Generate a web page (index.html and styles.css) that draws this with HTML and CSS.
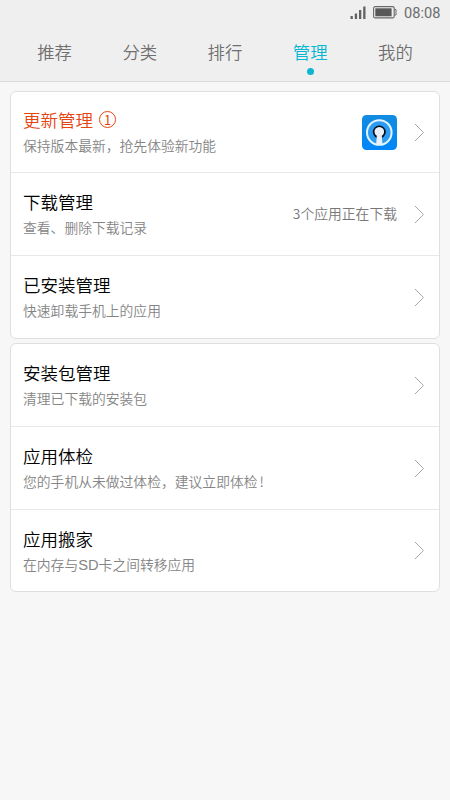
FILE: index.html
```html
<!DOCTYPE html>
<html lang="zh-CN">
<head>
<meta charset="utf-8">
<title>应用市场</title>
<link rel="stylesheet" href="styles.css">
</head>
<body>
<header class="header">
  <div class="status">
    <svg class="signal" width="16" height="13" viewBox="0 0 16 13" fill="#626262"><rect x="0.5" y="10" width="2.3" height="3"/><rect x="4.8" y="7.5" width="2.3" height="5.5"/><rect x="9" y="4" width="2.3" height="9"/><rect x="13.2" y="0.5" width="2.3" height="12.5"/></svg>
    <svg class="battery" width="24" height="13" viewBox="0 0 24 13"><rect x="0.6" y="0.6" width="20.6" height="11.3" rx="1.5" fill="none" stroke="#686868" stroke-width="1.1"/><rect x="2.3" y="2.3" width="16.3" height="8" fill="#585858"/><path d="M21.5 3.5H23V9H21.5" fill="none" stroke="#686868"/></svg>
    <span class="clock">08:08</span>
  </div>
  <nav class="tabs">
    <a class="tab">推荐</a>
    <a class="tab">分类</a>
    <a class="tab">排行</a>
    <a class="tab active">管理</a>
    <a class="tab">我的</a>
  </nav>
</header>
<main>
  <section class="card">
    <div class="row first">
      <div class="text">
        <h2 class="title update">更新管理<span class="count">1</span></h2>
        <p class="desc">保持版本最新，抢先体验新功能</p>
      </div>
      <svg class="app" width="35" height="35" viewBox="0 0 35 35">
        <defs><linearGradient id="blue" x1="0" y1="0" x2="0" y2="1"><stop offset="0" stop-color="#138cdf"/><stop offset="1" stop-color="#0086fa"/></linearGradient></defs>
        <rect width="35" height="35" rx="4.5" fill="url(#blue)"/>
        <circle cx="17.3" cy="17.5" r="12.3" fill="#2b9cf2" stroke="#e4f3fd" stroke-width="2"/>
        <circle cx="17.3" cy="17" r="6.5" fill="#06101c"/>
        <path d="M14.8 20.8A4.8 4.8 0 1 1 19.8 20.8L20.4 28.8Q17.3 29.8 14.2 28.8Z" fill="#e9f0f7"/>
      </svg>
      <svg class="arrow" width="11" height="19" viewBox="0 0 11 19"><path d="M1 1L9.5 9.5L1 18"/></svg>
    </div>
    <div class="row">
      <div class="text">
        <h2 class="title">下载管理</h2>
        <p class="desc">查看、删除下载记录</p>
      </div>
      <span class="info">3个应用正在下载</span>
      <svg class="arrow" width="11" height="19" viewBox="0 0 11 19"><path d="M1 1L9.5 9.5L1 18"/></svg>
    </div>
    <div class="row">
      <div class="text">
        <h2 class="title">已安装管理</h2>
        <p class="desc">快速卸载手机上的应用</p>
      </div>
      <svg class="arrow" width="11" height="19" viewBox="0 0 11 19"><path d="M1 1L9.5 9.5L1 18"/></svg>
    </div>
  </section>
  <section class="card">
    <div class="row">
      <div class="text">
        <h2 class="title">安装包管理</h2>
        <p class="desc">清理已下载的安装包</p>
      </div>
      <svg class="arrow" width="11" height="19" viewBox="0 0 11 19"><path d="M1 1L9.5 9.5L1 18"/></svg>
    </div>
    <div class="row">
      <div class="text">
        <h2 class="title">应用体检</h2>
        <p class="desc">您的手机从未做过体检，建议立即体检<span class="mark">!</span></p>
      </div>
      <svg class="arrow" width="11" height="19" viewBox="0 0 11 19"><path d="M1 1L9.5 9.5L1 18"/></svg>
    </div>
    <div class="row">
      <div class="text">
        <h2 class="title">应用搬家</h2>
        <p class="desc">在内存与<span class="latin">SD</span>卡之间转移应用</p>
      </div>
      <svg class="arrow" width="11" height="19" viewBox="0 0 11 19"><path d="M1 1L9.5 9.5L1 18"/></svg>
    </div>
  </section>
</main>
</body>
</html>
```
FILE: styles.css
```css
* { box-sizing: border-box; }
body {
  margin: 0;
  min-height: 800px;
  background: #f7f7f7;
  font-family: "Noto Sans CJK SC", sans-serif;
  font-weight: 350;
}
.header {
  height: 82px;
  background: #efefef;
  border-bottom: 1px solid #dcdcdc;
}
.status {
  height: 25px;
  padding-right: 9px;
  display: flex;
  justify-content: flex-end;
  align-items: center;
}
.signal { margin-right: 7px; }
.battery { margin-right: 7px; }
.clock {
  width: 37px;
  padding-top: 1px;
  font: 400 14.6px/25px Roboto, sans-serif;
  color: #6c6c6c;
  white-space: nowrap;
}
.tabs {
  display: flex;
  padding: 0 12px;
}
.tab {
  flex: 1;
  display: flex;
  flex-direction: column;
  align-items: center;
  font-size: 17.4px;
  line-height: 26px;
  padding-top: 14px;
  color: #707070;
}
.tab.active { color: #07b6d3; }
.tab.active::after {
  content: "";
  width: 7px;
  height: 7px;
  margin-top: 3px;
  border-radius: 50%;
  background: #0fb5d0;
}
.card {
  margin: 9px 10px 0;
  background: #fff;
  border: 1px solid #dfdfdf;
  border-radius: 6px;
}
.card + .card { margin-top: 4px; }
.row {
  height: 83px;
  padding: 0 14px 0 12px;
  display: flex;
  align-items: center;
  border-bottom: 1px solid #e8e8e8;
}
.row.first { height: 81px; }
.row:last-child { height: 82px; border-bottom: 0; }
.card + .card .row:last-child { height: 81px; }
.text { flex: 1; }
.title {
  display: flex;
  align-items: center;
  margin: 0;
  font-size: 17.5px;
  line-height: 28px;
  font-weight: 350;
  color: #000;
}
.update { color: #e6440f; }
.count {
  width: 17px;
  height: 17px;
  margin: -1px 0 0 6px;
  border: 1px solid #e6440f;
  border-radius: 50%;
  font: 13px/15px "Noto Sans CJK SC", sans-serif;
  text-align: center;
}
.desc {
  margin: -1px 0 1px;
  font-size: 13.8px;
  line-height: 24px;
  color: #858585;
}
.latin {
  font-family: "Liberation Sans", sans-serif;
  font-size: 14.7px;
  line-height: 1;
}
.mark { margin-left: 2px; }
.info {
  margin: -2px 17px 0 0;
  font-size: 13.8px;
  line-height: 24px;
  color: #777;
}
.app { margin-right: 17px; }
.arrow {
  fill: none;
  stroke: #a8a8a8;
  stroke-width: 1;
}
```
